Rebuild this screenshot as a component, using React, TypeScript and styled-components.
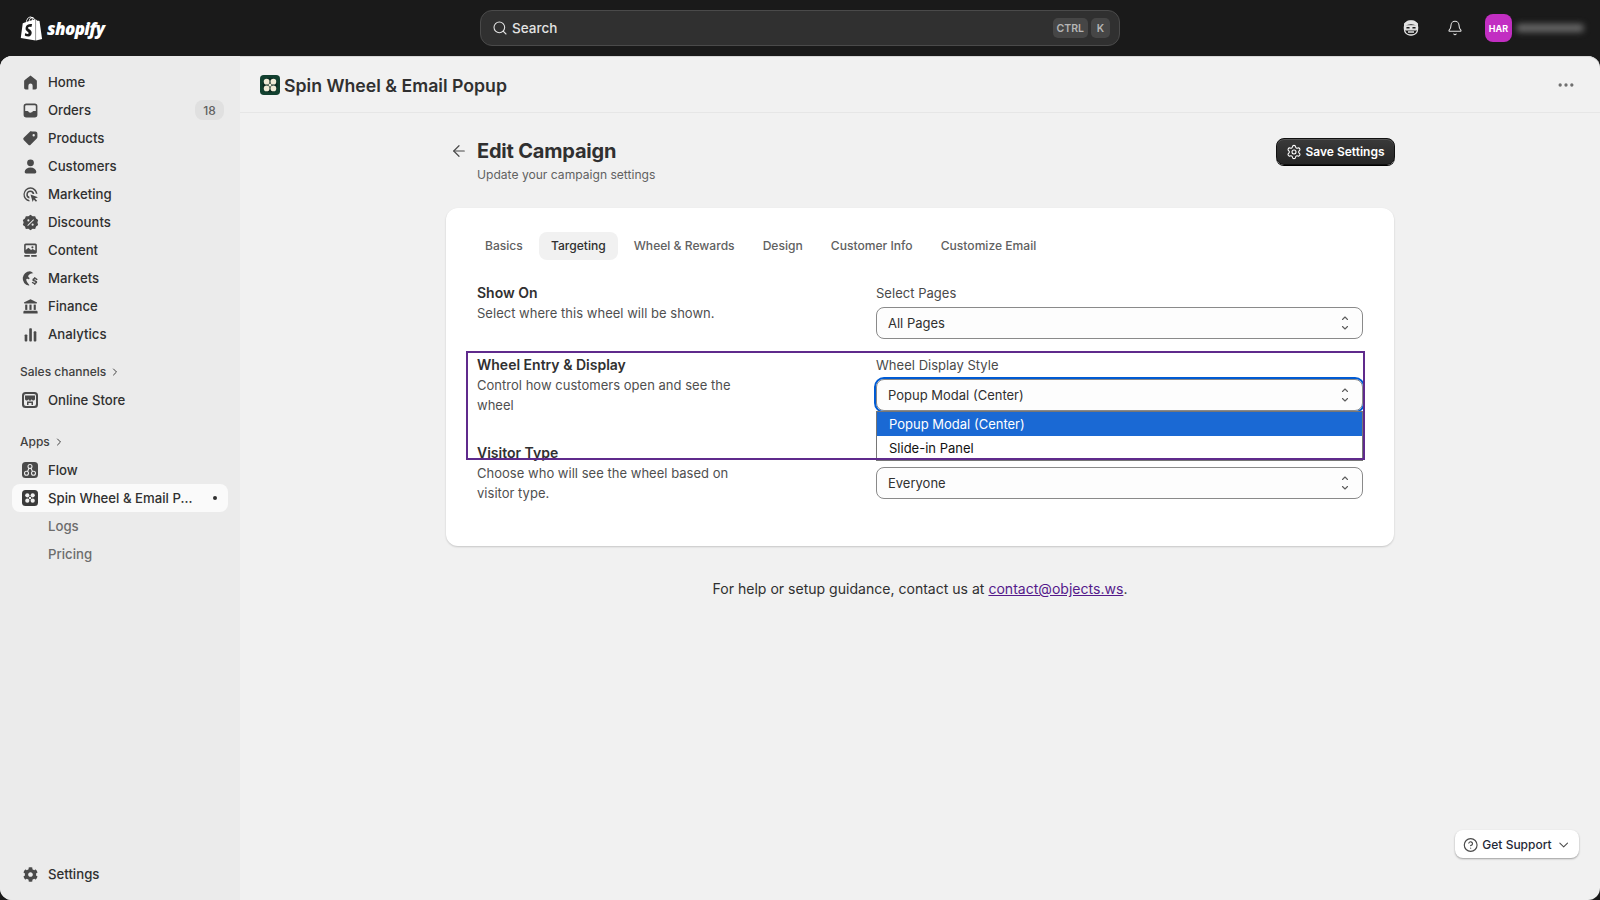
import React from "react";
import styled, { createGlobalStyle } from "styled-components";
import { ArrowLeft, Bell, ChevronDown, ChevronRight, CircleHelp, Ellipsis, Search, Settings as Gear } from "lucide-react";
import { FaShopify, FaCog } from "react-icons/fa";

const Global = createGlobalStyle`
  html, body { margin: 0; padding: 0; height: 100%; background: #1a1a1a; overflow: hidden; }
  body { font-family: Inter, "Liberation Sans", sans-serif; color: #303030; }
  * { box-sizing: border-box; }
`;

const Page = styled.div`
  width: 1600px; height: 900px; display: flex; flex-direction: column; background: #1a1a1a;
`;
const Topbar = styled.header`
  height: 56px; flex: none; display: grid; grid-template-columns: 480px 640px 1fr; align-items: center; color: #fff;
`;
const Brand = styled.div`
  display: flex; align-items: center; gap: 3px; padding-left: 19px; color: #fff;
`;
const Wordmark = styled.span`
  font-family: "Open Sans", "Liberation Sans", sans-serif; font-weight: 800; font-style: italic; font-size: 17px; letter-spacing: -0.6px;
`;
const SearchBox = styled.div`
  height: 36px; border-radius: 12px; background: #303030; border: 1px solid #4a4a4a; display: flex; align-items: center;
  padding: 0 9px 0 11px; gap: 4px; color: #e3e3e3; font-size: 13.5px; font-weight: 450;
`;
const SearchLabel = styled.span` flex: 1; `;
const Keys = styled.div` display: flex; gap: 3px; `;
const Key = styled.span`
  height: 20px; min-width: 19px; padding: 0 4px; border-radius: 5px; background: #464646; color: #b5b5b5;
  font-size: 10.5px; font-weight: 600; display: flex; align-items: center; justify-content: center;
`;
const TopRight = styled.div`
  display: flex; align-items: center; justify-content: flex-end; padding-right: 16px;
`;
const TopIcon = styled.span`
  width: 44px; display: flex; justify-content: center; color: #e3e3e3;
`;
const Avatar = styled.span`
  width: 27px; height: 28px; margin-left: 8px; border-radius: 8px; background: #c22ec2; color: #fff; font-size: 9px; font-weight: 700;
  display: flex; align-items: center; justify-content: center;
`;
const BlurName = styled.span`
  width: 68px; height: 8px; margin-left: 4px; background: #6a6a6a; filter: blur(3px); border-radius: 4px;
`;

const Body = styled.div`
  flex: 1; display: flex; min-height: 0; border-radius: 12px; overflow: hidden; background: #f1f1f1; position: relative;
  box-shadow: inset 0 1px 0 #d8d8d8;
`;
const Sidebar = styled.aside`
  width: 240px; flex: none; background: #ebebeb; padding: 12px 12px 0; display: flex; flex-direction: column;
`;
const Spacer = styled.div` flex: 1; `;
const BottomGap = styled.div` flex: none; height: 12px; `;
const NavRow = styled.div<{ $active?: boolean; $sub?: boolean }>`
  height: 28px; flex: none; display: flex; align-items: center; border-radius: 8px; padding: 0 8px 0 ${(p) => (p.$sub ? "36px" : "8px")};
  gap: 8px; font-size: 13.2px; font-weight: ${(p) => (p.$sub ? 450 : 500)}; color: ${(p) => (p.$sub ? "#6d6d6d" : "#303030")};
  background: ${(p) => (p.$active ? "#fafafa" : "transparent")};
`;
const NavIcon = styled.span`
  width: 20px; height: 20px; display: flex; align-items: center; justify-content: center; flex: none; color: #4a4a4a;
`;
const NavText = styled.span` flex: 1; white-space: nowrap; `;
const Badge = styled.span`
  height: 20px; width: 29px; border-radius: 8px; background: #e0e0e0; color: #616161; font-size: 12px; font-weight: 500;
  display: flex; align-items: center; justify-content: center; margin-right: -4px;
`;
const Dot = styled.span`
  width: 4px; height: 4px; border-radius: 50%; background: #303030; margin-right: 3px;
`;
const Heading = styled.div<{ $top: number }>`
  height: 24px; margin: ${(p) => p.$top}px 0 2px; padding: 0 0 1px 8px; flex: none; display: flex; align-items: center; gap: 3px;
  font-size: 12px; font-weight: 500; color: #404040;
`;

const Main = styled.main` flex: 1; min-width: 0; display: flex; flex-direction: column; `;
const AppHeader = styled.div`
  height: 57px; flex: none; border-bottom: 1px solid #e6e6e6; display: flex; align-items: center; gap: 4px; padding: 2px 24px 0 20px;
`;
const AppTitle = styled.h1`
  flex: 1; margin: 0; font-size: 17.7px; font-weight: 600; color: #303030;
`;
const More = styled.span` color: #6f6f6f; display: flex; `;
const Content = styled.div`
  width: 948px; margin: 0 auto; padding-top: 24px;
`;
const PageHead = styled.div`
  display: flex; align-items: flex-start; height: 71px; margin-right: -1px;
`;
const Back = styled.span` width: 31px; padding: 5px 0 0 4px; color: #4a4a4a; display: flex; `;
const PageTitles = styled.div` flex: 1; `;
const PageTitle = styled.h2`
  margin: 0; font-size: 20px; line-height: 28px; font-weight: 700; color: #303030; letter-spacing: -0.2px;
`;
const PageSub = styled.p`
  margin: 0; font-size: 12.1px; line-height: 20px; color: #616161;
`;
const SaveButton = styled.button`
  height: 27px; width: 119px; margin-top: 1px; border: 1px solid #111; border-radius: 8px; display: flex; align-items: center; justify-content: center; gap: 3px;
  background: linear-gradient(#3a3a3a, #262626); color: #fff; font: 600 12px Inter, sans-serif;
  box-shadow: inset 0 1px 0 #555, 0 1px 0 #000;
`;
const Card = styled.section`
  position: relative; height: 338px; background: #fff; border-radius: 12px; padding: 24px 31px 0;
  box-shadow: 0 1px 2px rgba(0,0,0,0.18);
`;
const Tabs = styled.div` display: flex; gap: 4px; margin-left: -4px; margin-bottom: 23px; `;
const Tab = styled.span<{ $on?: boolean }>`
  height: 28px; padding: 0 12px 1px; border-radius: 8px; display: flex; align-items: center; font-size: 12.1px; font-weight: ${(p) => (p.$on ? 550 : 500)};
  color: ${(p) => (p.$on ? "#303030" : "#616161")}; background: ${(p) => (p.$on ? "#f1f1f1" : "transparent")};
`;
const Row = styled.div<{ $h: number }>`
  height: ${(p) => p.$h}px; display: grid; grid-template-columns: 399px 1fr;
`;
const RowTitle = styled.div` font-size: 14px; line-height: 20px; font-weight: 600; color: #303030; `;
const RowDesc = styled.div` font-size: 13px; line-height: 20px; color: #4f4f4f; width: 285px; letter-spacing: 0.02px; `;
const FieldLabel = styled.div` font-size: 13px; line-height: 20px; color: #4a4a4a; margin-bottom: 4px; letter-spacing: 0.03px; `;
const FieldWrap = styled.div` position: relative; `;
const SelectBox = styled.div<{ $focus?: boolean }>`
  height: 32px; border: 1px solid #8a8a8a; border-radius: 8px; background: #fdfdfd; display: flex; align-items: center; justify-content: space-between;
  padding: 0 11px; font-size: 13px; color: #303030;
  ${(p) => p.$focus && "outline: 2px solid #005bd3; outline-offset: 0;"}
`;
const Dropdown = styled.div`
  position: absolute; left: 0; right: 0; top: 56px; z-index: 3; background: #fff; border: 1px solid #767676;
  font-size: 13px; color: #111;
`;
const Option = styled.div<{ $on?: boolean }>`
  height: 24px; padding: 0 12px; display: flex; align-items: center;
  background: ${(p) => (p.$on ? "#1a69d4" : "#fff")}; color: ${(p) => (p.$on ? "#fff" : "#111")};
`;
const Annotation = styled.div`
  position: absolute; left: 20px; top: 143px; width: 899px; height: 109px; border: 2px solid #5f2a8c; z-index: 4; pointer-events: none;
`;
const HelpLine = styled.p`
  margin: 33px 0 0; text-align: center; font-size: 14.05px; line-height: 20px; color: #303030;
`;
const HelpLink = styled.a`
  color: #551a8b; text-decoration: underline;
`;
const Support = styled.div`
  position: absolute; right: 21px; bottom: 42px; width: 124px; height: 28px; background: #fff; border-radius: 8px; display: flex; align-items: center;
  padding: 1px 8px 0; gap: 4px; font-size: 12px; font-weight: 500; color: #1f2937; box-shadow: 0 1px 2px rgba(0,0,0,0.35);
`;
const SupportText = styled.span` flex: 1; white-space: nowrap; `;

const I: React.FC<{ children: React.ReactNode }> = ({ children }) => (
  <svg width="17" height="17" viewBox="0 0 16 16" fill="currentColor">{children}</svg>
);
const HomeI = () => <I><path d="M8 1.500 2.600 5.600c-.4.3-.6.7-.6 1.200V13c0 .9.700 1.500 1.500 1.500H6V11a2 2 0 0 1 4 0v3.500h2.500c.8 0 1.500-.6 1.500-1.500V6.800c0-.5-.2-.9-.6-1.200z" /></I>;
const OrdersI = () => <I><path fillRule="evenodd" d="M4 1.500h8A2.500 2.500 0 0 1 14.500 4v8a2.500 2.500 0 0 1-2.500 2.500H4A2.500 2.500 0 0 1 1.500 12V4A2.500 2.500 0 0 1 4 1.500Zm0 1.500A1 1 0 0 0 3 4v4.500h2.200c.5 0 .8.300 1 .700.300.600.900.800 1.800.800s1.500-.200 1.800-.800c.200-.400.500-.700 1-.700H13V4a1 1 0 0 0-1-1Z" /></I>;
const TagI = () => <I><path fillRule="evenodd" d="M9.300 1.500h3.200c1.100 0 2 .900 2 2v3.200c0 .500-.200 1-.600 1.400l-5.800 5.800a1.500 1.500 0 0 1-2.100 0l-4.400-4.400a1.500 1.500 0 0 1 0-2.100l5.800-5.800c.400-.400.900-.600 1.900-.100ZM11 6a1.100 1.100 0 1 0 0-2.200A1.100 1.100 0 0 0 11 6Z" /></I>;
const PersonI = () => <I><circle cx="8" cy="4.500" r="3.200" /><path d="M8 9c-3 0-5.200 1.600-5.500 4-.1.800.5 1.500 1.300 1.500h8.400c.8 0 1.400-.7 1.300-1.500C13.200 10.600 11 9 8 9Z" /></I>;
const MarketingI = () => <I><path d="M8 1.200a6.800 6.800 0 0 0-1 13.500v-1.500a5.300 5.300 0 1 1 6.100-5.900h1.500A6.800 6.800 0 0 0 8 1.200Z" /><path d="M8 4.200a3.800 3.800 0 0 0-1 7.500V10.100a2.300 2.300 0 1 1 3-2.600h1.600A3.800 3.800 0 0 0 8 4.200Z" /><path d="m8 8 7 2.500-2.800 1.200 2 2.200-1.100 1-2-2.200L10 15z" /></I>;
const DiscountI = () => <I><path fillRule="evenodd" d="M8 .8l2 1.400 2.400-.2.800 2.300 2 1.400-.7 2.300.7 2.300-2 1.400-.8 2.300-2.400-.2-2 1.400-2-1.400-2.400.2-.8-2.300-2-1.400.7-2.300L.8 5.700l2-1.400.8-2.300 2.400.2ZM6 5a1 1 0 1 0 0 2 1 1 0 0 0 0-2Zm4 4a1 1 0 1 0 0 2 1 1 0 0 0 0-2Zm.7-4L5 10.700l.6.600 5.700-5.700Z" /></I>;
const ContentI = () => <I><path fillRule="evenodd" d="M3.500 1.500h9c.900 0 1.500.700 1.500 1.500v6.500c0 .800-.600 1.500-1.500 1.500h-9C2.600 11 2 10.300 2 9.500V3c0-.800.600-1.500 1.500-1.500ZM3.500 3v4.500l2.500-2 2.500 2 1.500-1 2.500 1.500V3ZM9.800 4a1 1 0 1 1 0 2 1 1 0 0 1 0-2Z" /><rect x="2" y="12.300" width="5.500" height="1.500" rx=".7" /><rect x="8.500" y="12.300" width="5.500" height="1.500" rx=".7" /></I>;
const MarketsI = () => <I><path d="M7.500 1.200a6.800 6.800 0 0 0-1.200 13.500c.5 0 .7-.5.400-.9C5.500 12.300 4 11 4 9c0-.8 1-1 1.700-.5.700.4 1.300.3 1.400-.4.100-.8-.9-1-1.200-1.700C5.500 5.500 6.500 4.200 8 3.500c.7-.3 1.800-.6 2.800-.3a7 7 0 0 0-3.300-2Z" /><path d="M11.500 6.500v1.100c-1 .2-1.700.8-1.700 1.700 0 2 2.800 1.300 2.800 2.200 0 .3-.4.500-1 .5s-1-.2-1.100-.7H9.200c.1 1 .9 1.600 2.300 1.800v1h1.100v-1c1-.2 1.700-.8 1.700-1.700 0-2-2.800-1.300-2.800-2.200 0-.3.400-.5.900-.5s.9.200 1 .6h1.300c-.1-.9-.8-1.500-2.100-1.700V6.500Z" /></I>;
const FinanceI = () => <I><path d="M8 1.200 2.200 4c-.6.300-.4 1.200.3 1.200h11c.7 0 .9-.9.300-1.200Z" /><rect x="3" y="6.200" width="2" height="5" /><rect x="7" y="6.200" width="2" height="5" /><rect x="11" y="6.200" width="2" height="5" /><path d="M2.500 12h11c.7 0 1.200.5 1.200 1.200v1.300H1.300v-1.300c0-.7.500-1.200 1.200-1.200Z" /></I>;
const AnalyticsI = () => <I><rect x="2.500" y="8" width="2.500" height="6.500" rx=".8" /><rect x="6.800" y="2" width="2.500" height="12.500" rx=".8" /><rect x="11" y="5" width="2.500" height="9.500" rx=".8" /></I>;

const Tile: React.FC<{ children: React.ReactNode; bg?: string }> = ({ children, bg = "#4a4a4a" }) => (
  <svg width="16" height="16" viewBox="0 0 16 16"><rect width="16" height="16" rx="3.500" fill={bg} />{children}</svg>
);
const StoreI = () => (
  <Tile>
    <rect x="2" y="2" width="12" height="12" rx="2" fill="#ebebeb" />
    <path d="M3 3.500h10v3.200a1.500 1.500 0 0 1-3.300.3 1.700 1.700 0 0 1-3.400 0A1.500 1.500 0 0 1 3 6.700Z" fill="#4a4a4a" />
    <path d="M5 9.500h6V13H9.500v-2h-3v2H5z" fill="#4a4a4a" />
  </Tile>
);
const FlowI = () => (
  <Tile>
    <g fill="none" stroke="#ebebeb" strokeWidth="1.100">
      <circle cx="8" cy="4.500" r="2" /><circle cx="4.500" cy="11.200" r="2" /><circle cx="11.500" cy="11.200" r="2" />
      <path d="M7 6.300 5.500 9.400M9 6.300l1.500 3.100" />
    </g>
  </Tile>
);
const Petals: React.FC<{ c: string; r: number }> = ({ c, r }) => (
  <g fill={c}>
    <circle cx="5.300" cy="5.300" r={r} /><circle cx="10.700" cy="5.300" r={r} />
    <circle cx="5.300" cy="10.700" r={r} /><circle cx="10.700" cy="10.700" r={r} />
    <circle cx="8" cy="8" r="1.200" />
  </g>
);
const SpinTileI = () => <Tile bg="#3a3a3a"><Petals c="#f0f0f0" r={2.100} /></Tile>;
const AppLogo = () => (
  <svg width="20" height="20" viewBox="0 0 16 16">
    <rect width="16" height="16" rx="3" fill="#12402f" />
    <circle cx="8" cy="8" r="6" fill="#0d2c22" />
    <Petals c="#f0ead6" r={2.300} />
  </svg>
);
const Updown = () => (
  <svg width="12" height="16" viewBox="0 0 12 16" fill="none" stroke="#5c5c5c" strokeWidth="1.100" strokeLinecap="round" strokeLinejoin="round">
    <path d="M3.500 4.500 6 2l2.500 2.500M3.500 11.500 6 14l2.500-2.500" />
  </svg>
);
const Sidekick = () => (
  <svg width="18" height="18" viewBox="0 0 18 18" fill="none" stroke="#e3e3e3" strokeWidth="1.300">
    <rect x="2.500" y="2" width="13" height="14" rx="5.500" />
    <path d="M2.800 6.500C6 3.800 12 3.800 15.200 6.500V4.500L12 2.500H6L2.800 4.500Z" fill="#e3e3e3" />
    <rect x="2.500" y="6.800" width="13" height="4" rx="1.500" fill="#e3e3e3" />
    <rect x="4.300" y="8" width="3.400" height="1.600" rx=".7" fill="#1a1a1a" stroke="none" />
    <rect x="10.300" y="8" width="3.400" height="1.600" rx=".7" fill="#1a1a1a" stroke="none" />
    <path d="M6 13h6" strokeWidth="1.500" />
  </svg>
);

const navTop: [string, React.ReactNode, string?][] = [
  ["Home", <HomeI />],
  ["Orders", <OrdersI />, "18"],
  ["Products", <TagI />],
  ["Customers", <PersonI />],
  ["Marketing", <MarketingI />],
  ["Discounts", <DiscountI />],
  ["Content", <ContentI />],
  ["Markets", <MarketsI />],
  ["Finance", <FinanceI />],
  ["Analytics", <AnalyticsI />],
];
const tabs = ["Basics", "Targeting", "Wheel & Rewards", "Design", "Customer Info", "Customize Email"];

export default function App() {
  return (
    <Page>
      <Global />
      <Topbar>
        <Brand>
          <FaShopify size={25} />
          <Wordmark>shopify</Wordmark>
        </Brand>
        <SearchBox>
          <Search size={16} strokeWidth={1.6} />
          <SearchLabel>Search</SearchLabel>
          <Keys><Key>CTRL</Key><Key>K</Key></Keys>
        </SearchBox>
        <TopRight>
          <TopIcon><Sidekick /></TopIcon>
          <TopIcon><Bell size={16} strokeWidth={1.6} /></TopIcon>
          <Avatar>HAR</Avatar>
          <BlurName />
        </TopRight>
      </Topbar>
      <Body>
        <Sidebar>
          {navTop.map(([label, icon, badge]) => (
            <NavRow key={label}>
              <NavIcon>{icon}</NavIcon>
              <NavText>{label}</NavText>
              {badge && <Badge>{badge}</Badge>}
            </NavRow>
          ))}
          <Heading $top={12}>Sales channels <ChevronRight size={12} /></Heading>
          <NavRow><NavIcon><StoreI /></NavIcon><NavText>Online Store</NavText></NavRow>
          <Heading $top={16}>Apps <ChevronRight size={12} /></Heading>
          <NavRow><NavIcon><FlowI /></NavIcon><NavText>Flow</NavText></NavRow>
          <NavRow $active><NavIcon><SpinTileI /></NavIcon><NavText>Spin Wheel &amp; Email P...</NavText><Dot /></NavRow>
          <NavRow $sub><NavText>Logs</NavText></NavRow>
          <NavRow $sub><NavText>Pricing</NavText></NavRow>
          <Spacer />
          <NavRow><NavIcon><FaCog size={15} /></NavIcon><NavText>Settings</NavText></NavRow>
          <BottomGap />
        </Sidebar>
        <Main>
          <AppHeader>
            <AppLogo />
            <AppTitle>Spin Wheel &amp; Email Popup</AppTitle>
            <More><Ellipsis size={20} /></More>
          </AppHeader>
          <Content>
            <PageHead>
              <Back><ArrowLeft size={18} strokeWidth={1.6} /></Back>
              <PageTitles>
                <PageTitle>Edit Campaign</PageTitle>
                <PageSub>Update your campaign settings</PageSub>
              </PageTitles>
              <SaveButton><Gear size={16} strokeWidth={1.6} />Save Settings</SaveButton>
            </PageHead>
            <Card>
              <Tabs>{tabs.map((t) => <Tab key={t} $on={t === "Targeting"}>{t}</Tab>)}</Tabs>
              <Row $h={72}>
                <div>
                  <RowTitle>Show On</RowTitle>
                  <RowDesc>Select where this wheel will be shown.</RowDesc>
                </div>
                <FieldWrap>
                  <FieldLabel>Select Pages</FieldLabel>
                  <SelectBox>All Pages<Updown /></SelectBox>
                </FieldWrap>
              </Row>
              <Row $h={88}>
                <div>
                  <RowTitle>Wheel Entry &amp; Display</RowTitle>
                  <RowDesc>Control how customers open and see the wheel</RowDesc>
                </div>
                <FieldWrap>
                  <FieldLabel>Wheel Display Style</FieldLabel>
                  <SelectBox $focus>Popup Modal (Center)<Updown /></SelectBox>
                  <Dropdown>
                    <Option $on>Popup Modal (Center)</Option>
                    <Option>Slide-in Panel</Option>
                  </Dropdown>
                </FieldWrap>
              </Row>
              <Row $h={72}>
                <div>
                  <RowTitle>Visitor Type</RowTitle>
                  <RowDesc>Choose who will see the wheel based on visitor type.</RowDesc>
                </div>
                <FieldWrap>
                  <FieldLabel>Visitor Type</FieldLabel>
                  <SelectBox>Everyone<Updown /></SelectBox>
                </FieldWrap>
              </Row>
              <Annotation />
            </Card>
            <HelpLine>For help or setup guidance, contact us at <HelpLink href="#">contact@objects.ws</HelpLink>.</HelpLine>
          </Content>
        </Main>
        <Support>
          <CircleHelp size={16} strokeWidth={1.8} color="#4a4a4a" />
          <SupportText>Get Support</SupportText>
          <ChevronDown size={16} strokeWidth={1.6} color="#4a4a4a" />
        </Support>
      </Body>
    </Page>
  );
}
